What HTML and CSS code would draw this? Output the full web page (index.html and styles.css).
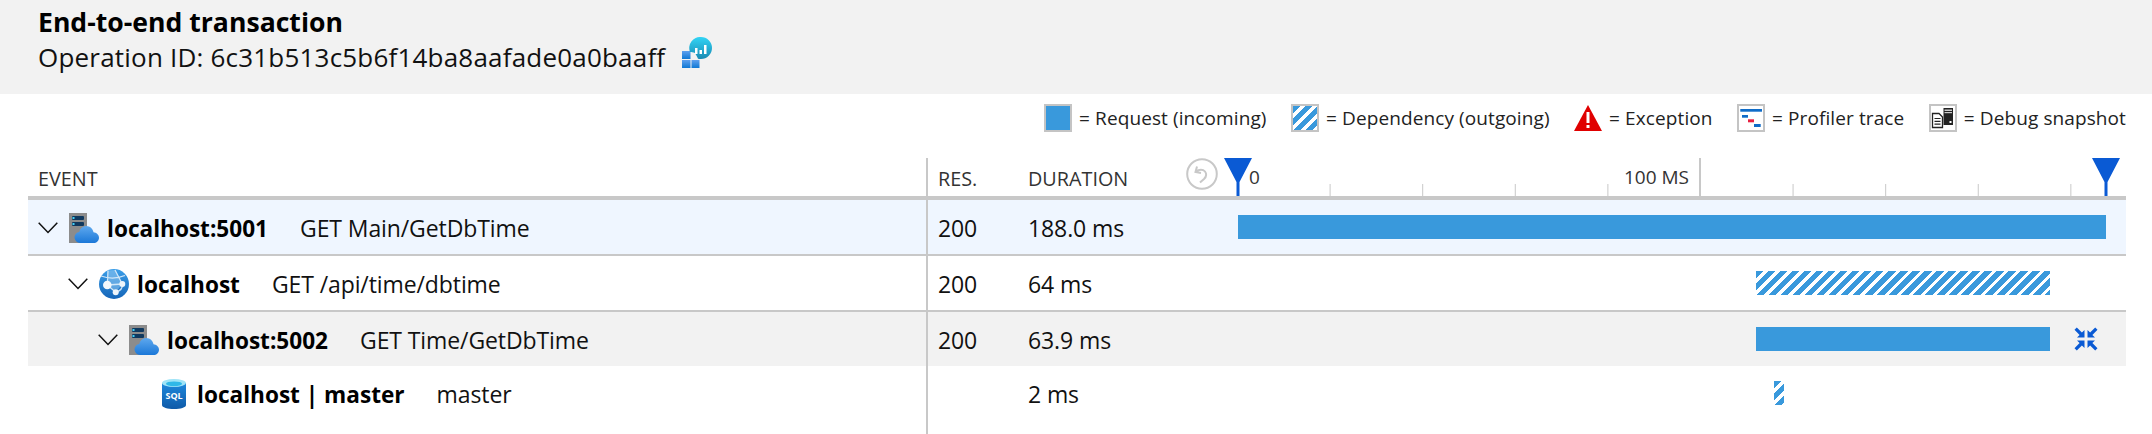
FILE: index.html
```html
<!DOCTYPE html>
<html lang="en">
<head>
<meta charset="utf-8">
<title>End-to-end transaction</title>
<link rel="stylesheet" href="styles.css">
</head>
<body>
<svg class="defs" width="0" height="0" aria-hidden="true">
  <defs>
    <linearGradient id="cloud" x1="0" y1="0" x2="0" y2="1"><stop offset="0" stop-color="#5ea8ee"/><stop offset="1" stop-color="#1b78d8"/></linearGradient>
    <linearGradient id="globe" x1="0" y1="0" x2="0" y2="1"><stop offset="0" stop-color="#3b9ee8"/><stop offset="1" stop-color="#1565b8"/></linearGradient>
    <linearGradient id="bubble" x1="0" y1="0" x2="0" y2="1"><stop offset="0" stop-color="#32d4f5"/><stop offset="1" stop-color="#198ab3"/></linearGradient>
    <linearGradient id="tile" x1="0" y1="0" x2="0" y2="1"><stop offset="0" stop-color="#5ea0ef"/><stop offset="1" stop-color="#0f78d4"/></linearGradient>
    <linearGradient id="sql" x1="0" y1="0" x2="0" y2="1"><stop offset="0" stop-color="#1e88dc"/><stop offset="1" stop-color="#0f5aa8"/></linearGradient>
    <symbol id="server" viewBox="0 0 30 30">
      <rect x="0" y="0" width="18" height="30" fill="#8c8c8c"/>
      <rect x="3" y="3" width="12" height="4" rx="1" fill="#10395f"/>
      <rect x="3" y="9" width="12" height="4" rx="1" fill="#10395f"/>
      <rect x="3.5" y="4" width="2" height="2" fill="#45d0f5"/>
      <rect x="3.5" y="10" width="2" height="2" fill="#45d0f5"/>
      <path d="M11 30a5.6 5.6 0 0 1-5.5-5.7c0-2.9 2.1-5 4.8-5.4C11 15.500 13.900 13 17.300 13c3.700 0 6.500 2.800 7.200 6.300 2.900.3 5.500 2.300 5.500 5.400 0 3-2.400 5.300-5.500 5.300z" fill="url(#cloud)"/>
    </symbol>
  </defs>
</svg>

<header class="page-head">
  <h1 class="page-title">End-to-end transaction</h1>
  <div class="op-line">
    <span>Operation ID: 6c31b513c5b6f14ba8aafade0a0baaff</span>
    <svg class="op-icon" viewBox="0 0 30 31" aria-hidden="true">
      <rect x="0" y="14" width="8.500" height="8" fill="url(#tile)"/>
      <rect x="0" y="23" width="8.500" height="8" fill="url(#tile)"/>
      <rect x="9.500" y="23" width="8" height="8" fill="url(#tile)"/>
      <path d="M19 0a11 11 0 0 1 0 22c-1.500 0-3-.3-3-.3-.5-1.500-2-4-3-5.700-2-.8-3.500-1-5-1A11 11 0 0 1 19 0z" fill="url(#bubble)"/>
      <rect x="13" y="11" width="2.500" height="6" fill="#fff"/>
      <rect x="17.500" y="13" width="2.500" height="4" fill="#fff"/>
      <rect x="22" y="8" width="2.500" height="9" fill="#fff"/>
    </svg>
  </div>
</header>

<div class="legend">
  <div class="legend-item"><span class="swatch swatch-solid"></span><span>= Request (incoming)</span></div>
  <div class="legend-item"><span class="swatch swatch-hatch"></span><span>= Dependency (outgoing)</span></div>
  <div class="legend-item">
    <svg class="legend-icon" viewBox="0 0 28 28" aria-hidden="true">
      <path d="M14 1 28 27H0z" fill="#e00000"/>
      <rect x="12.500" y="8" width="3" height="11" fill="#fff"/>
      <rect x="12.500" y="21" width="3" height="3" fill="#fff"/>
    </svg>
    <span>= Exception</span>
  </div>
  <div class="legend-item">
    <span class="swatch">
      <svg class="swatch-art" viewBox="0 0 24 24" aria-hidden="true">
        <rect x="1.300" y="3" width="21.700" height="2.700" fill="#0f6cc8"/>
        <rect x="3" y="9" width="6" height="2.700" fill="#0f6cc8"/>
        <rect x="9" y="13.300" width="6" height="3" fill="#e81f3f"/>
        <rect x="15" y="18" width="6.700" height="3" fill="#0f6cc8"/>
      </svg>
    </span>
    <span>= Profiler trace</span>
  </div>
  <div class="legend-item">
    <span class="swatch">
      <svg class="swatch-art" viewBox="0 0 24 24" aria-hidden="true">
        <path d="M1.500 7.500h6.500l3.500 3.500v10.500h-10z" fill="#fff" stroke="#222" stroke-width="1.300"/>
        <path d="M3.500 12.500h6M3.500 15.300h6M3.500 18.100h6" stroke="#222" stroke-width="1.200"/>
        <rect x="12.500" y="2" width="9.500" height="17" fill="#222"/>
        <rect x="13.500" y="3.500" width="7.500" height="1.500" fill="#ccc"/>
        <rect x="13.500" y="6" width="7.500" height="1.200" fill="#ccc"/>
        <rect x="18.500" y="15" width="2" height="2" fill="#fff"/>
      </svg>
    </span>
    <span>= Debug snapshot</span>
  </div>
</div>

<main class="trace">
  <div class="row row-head">
    <div class="cell cell-event head-label">EVENT</div>
    <div class="cell cell-res head-label">RES.</div>
    <div class="cell cell-dur head-label head-dur">
      <span>DURATION</span>
      <svg class="reset-icon" viewBox="0 0 32 32" aria-hidden="true">
        <circle cx="16" cy="16" r="14.800" fill="none" stroke="#c8c8c8" stroke-width="2"/>
        <path d="M11 8.500 9.500 14l5.500 1M10 13.500c3-2.500 7-2.500 9 0 2 2.600 1 5.500-1 7.500l-4 3.500" fill="none" stroke="#c8c8c8" stroke-width="2"/>
      </svg>
    </div>
    <div class="cell cell-time head-time">
      <div class="scale">
        <div class="scale-major"><span>0</span><span>100 MS</span></div>
        <svg class="marker marker-start" viewBox="0 0 28 38" aria-hidden="true"><path d="M0 0h28L15.500 24v14h-3V24z" fill="#0a5ad4"/></svg>
        <svg class="marker marker-end" viewBox="0 0 28 38" aria-hidden="true"><path d="M0 0h28L15.500 24v14h-3V24z" fill="#0a5ad4"/></svg>
      </div>
    </div>
  </div>

  <div class="row row-data row-selected">
    <div class="cell cell-event level-0">
      <svg class="chevron" viewBox="0 0 20 12" aria-hidden="true"><path d="M.7.7 10 10.500 19.300.7" fill="none" stroke="#111" stroke-width="1.500"/></svg>
      <svg class="node-icon"><use href="#server"/></svg>
      <strong class="node-name">localhost:5001</strong>
      <span class="node-op">GET Main/GetDbTime</span>
    </div>
    <div class="cell cell-res">200</div>
    <div class="cell cell-dur">188.0 ms</div>
    <div class="cell cell-time"><div class="bar bar-solid" style="margin-left:0;width:868px"></div></div>
  </div>

  <div class="row row-data">
    <div class="cell cell-event level-1">
      <svg class="chevron" viewBox="0 0 20 12" aria-hidden="true"><path d="M.7.7 10 10.500 19.300.7" fill="none" stroke="#111" stroke-width="1.500"/></svg>
      <svg class="node-icon" viewBox="0 0 30 30" aria-hidden="true">
        <circle cx="15" cy="15" r="15" fill="url(#globe)"/>
        <path d="M9 1.500 8.300 16l15-1-7-14zM8.300 16l8.400 7.300 6.600-8.300" fill="#8fc6f0" fill-opacity=".55"/>
        <path d="M2 7c7 2.500 14 3.500 24-.5M8.300 16l15-1M8.300 16l8.400 7.300M23.300 15c.5 4-2.500 7-6.600 8.300M9 1.500 8.300 16M16 1l7.300 14" fill="none" stroke="#cfe6f8" stroke-width="1.300"/>
        <circle cx="8.300" cy="16" r="4.300" fill="#f4f8fc"/>
        <circle cx="23.300" cy="15" r="3" fill="#eef5fb"/>
        <circle cx="16.700" cy="23.300" r="3" fill="#eef5fb"/>
      </svg>
      <strong class="node-name">localhost</strong>
      <span class="node-op">GET /api/time/dbtime</span>
    </div>
    <div class="cell cell-res">200</div>
    <div class="cell cell-dur">64 ms</div>
    <div class="cell cell-time"><div class="bar bar-hatch" style="margin-left:518px;width:294px"></div></div>
  </div>

  <div class="row row-data row-shaded">
    <div class="cell cell-event level-2">
      <svg class="chevron" viewBox="0 0 20 12" aria-hidden="true"><path d="M.7.7 10 10.500 19.300.7" fill="none" stroke="#111" stroke-width="1.500"/></svg>
      <svg class="node-icon"><use href="#server"/></svg>
      <strong class="node-name">localhost:5002</strong>
      <span class="node-op">GET Time/GetDbTime</span>
    </div>
    <div class="cell cell-res">200</div>
    <div class="cell cell-dur">63.9 ms</div>
    <div class="cell cell-time">
      <div class="bar bar-solid" style="margin-left:518px;width:294px"></div>
      <svg class="collapse-icon" viewBox="0 0 24 24" aria-hidden="true">
        <path d="M10.500 10.500H3l2.600-2.600L.5 2.800 2.800.5l5.100 5.100L10.500 3zM13.500 10.500H21l-2.600-2.600 5.100-5.100L21.200.5l-5.100 5.100L13.500 3zM10.500 13.500H3l2.600 2.600-5.100 5.100 2.300 2.300 5.100-5.100 2.600 2.600zM13.500 13.500H21l-2.600 2.600 5.100 5.100-2.300 2.300-5.100-5.100-2.600 2.600z" fill="#0a5ad4"/>
      </svg>
    </div>
  </div>

  <div class="row row-data row-last">
    <div class="cell cell-event level-leaf">
      <svg class="sql-icon" viewBox="0 0 24 30" aria-hidden="true">
        <path d="M0 4v22c0 2.500 5.500 4 12 4s12-1.500 12-4V4z" fill="url(#sql)"/>
        <ellipse cx="12" cy="4" rx="12" ry="4" fill="#9fe4f7"/>
        <ellipse cx="12" cy="4.800" rx="8" ry="2.400" fill="#2fb8e8"/>
        <text x="12" y="20" class="sql-text">SQL</text>
      </svg>
      <strong class="node-name">localhost | master</strong>
      <span class="node-op">master</span>
    </div>
    <div class="cell cell-res"></div>
    <div class="cell cell-dur">2 ms</div>
    <div class="cell cell-time"><div class="bar bar-hatch" style="margin-left:536px;width:10px"></div></div>
  </div>

  <div class="row row-tail">
    <div class="cell cell-event"></div>
    <div class="cell cell-res"></div>
  </div>
</main>
</body>
</html>
```

FILE: styles.css
```css
* { box-sizing: border-box; }
html, body { margin: 0; padding: 0; background: #fff; }
body {
  font-family: "Open Sans", "Noto Sans", "Liberation Sans", sans-serif;
  color: #111;
  height: 434px;
  overflow: hidden;
}
.defs { position: absolute; }

.page-head {
  height: 94px;
  background: #f2f2f2;
  padding: 6px 38px 0;
}
.page-title {
  margin: 0;
  font-size: 26.6px;
  font-weight: 700;
  line-height: 32px;
  color: #000;
}
.op-line {
  display: flex;
  align-items: flex-start;
  gap: 17px;
  font-size: 26px;
  line-height: 38px;
  letter-spacing: 0.2px;
  color: #111;
}
.op-icon { width: 30px; height: 31px; margin-top: -1px; }

.legend {
  height: 64px;
  display: flex;
  justify-content: flex-end;
  align-items: flex-start;
  gap: 24.5px;
  padding: 10px 26px 0 0;
  font-size: 19px;
  letter-spacing: 0.1px;
  color: #222;
}
.legend-item { display: flex; align-items: center; gap: 7px; height: 28px; }
.swatch {
  display: block;
  width: 28px;
  height: 28px;
  border: 2px solid #c4c4c4;
  background: #fff;
}
.swatch-solid { background: #3999dc; }
.swatch-hatch {
  background: repeating-linear-gradient(135deg, #3999dc 0 5.5px, #fff 5.5px 8.5px);
}
.swatch-art { display: block; width: 24px; height: 24px; }
.legend-icon { width: 28px; height: 28px; }

.trace { margin: 0 26px 0 28px; }
.row { display: grid; grid-template-columns: 898px 102px 210px 1fr; }
.row-head {
  height: 42px;
  border-bottom: 4px solid #c8c8c8;
}
.row-data {
  height: 56px;
  border-bottom: 2px solid #c8c8c8;
  font-size: 23px;
  letter-spacing: -0.1px;
  color: #111;
}
.row-selected { background: #eff6ff; }
.row-shaded { background: #f2f2f2; border-bottom: 0; height: 54px; }
.row-last { border-bottom: 0; height: 54px; }
.row-tail { height: 14px; }

.cell { display: flex; align-items: center; min-width: 0; }
.row-data .cell-event,
.row-data .cell-res,
.row-data .cell-dur { padding-top: 2px; }
.cell-res {
  border-left: 2px solid #c8c8c8;
  padding-left: 10px;
}
.cell-event { white-space: nowrap; }
.level-0 { padding-left: 10px; }
.level-1 { padding-left: 40px; }
.level-2 { padding-left: 70px; }
.level-leaf { padding-left: 134px; }
.chevron { width: 20px; height: 12px; margin-right: 11px; flex: none; }
.node-icon { width: 30px; height: 30px; margin-right: 8px; flex: none; }
.sql-icon { width: 24px; height: 30px; margin-right: 11px; flex: none; }
.sql-text {
  font-family: "Open Sans", sans-serif;
  font-size: 9px;
  font-weight: 700;
  fill: #fff;
  text-anchor: middle;
}
.node-name { font-size: 22.6px; font-weight: 700; color: #000; margin-right: 32px; letter-spacing: 0; }
.node-op { color: #111; }

.head-label {
  font-size: 19.8px;
  color: #333;
  padding-left: 10px;
  padding-top: 2px;
}
.head-dur {
  padding-left: 0;
  padding-top: 0;
  padding-right: 20px;
  align-items: flex-start;
  justify-content: space-between;
  line-height: 38px;
}
.head-dur span { margin-top: 4px; line-height: 34px; }

.reset-icon { width: 32px; height: 32px; flex: none; }
.head-time { align-items: flex-start; }
.scale {
  position: relative;
  width: 868px;
  height: 38px;
  background-image: linear-gradient(to left, #c8c8c8 0 1px, transparent 1px);
  background-size: 92.6px 12px;
  background-repeat: repeat-x;
  background-position: left bottom;
}
.scale-major {
  display: flex;
  justify-content: space-between;
  align-items: center;
  width: 463px;
  height: 38px;
  border-right: 2px solid #c8c8c8;
  padding: 0 10px 0 11px;
  font-size: 19px;
  color: #333;
}
.marker { position: absolute; top: 0; width: 28px; height: 38px; }
.marker-start { left: -14px; }
.marker-end { right: -14px; }

.bar { height: 24px; flex: none; }
.bar-solid { background: #3999dc; }
.bar-hatch {
  background: repeating-linear-gradient(135deg, #3999dc 0 5.5px, #fff 5.5px 8.5px);
}
.collapse-icon { width: 24px; height: 24px; flex: none; margin-left: 24px; }
```
